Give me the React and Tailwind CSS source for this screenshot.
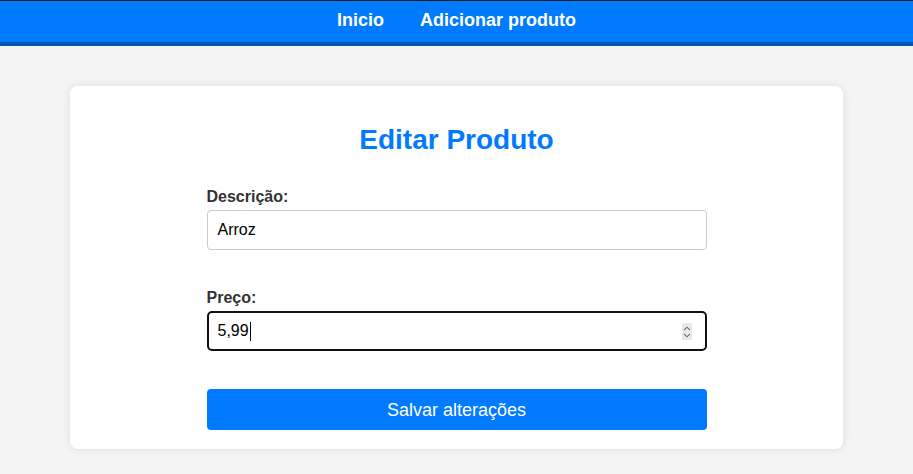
import React from "react";

export default function App() {
  return (
    <div className="min-h-[474px] bg-[#f4f4f4] font-['Liberation_Sans',Arial,sans-serif]">
      <header className="border-t border-t-[#1b1b1b] border-b-4 border-b-[#0056b3] bg-[#007bff] h-[46px] flex items-center justify-center gap-[36px] text-white text-[18px] font-bold leading-[20px]">
        <a className="pb-[3px]">Inicio</a>
        <a className="pb-[3px]">Adicionar produto</a>
      </header>

      <main className="mx-[70px] mt-[40px] bg-white rounded-lg shadow-[0_0_10px_rgba(0,0,0,0.1)] pt-[38px] pb-[19px]">
        <h2 className="text-center text-[#007bff] text-[28px] font-bold leading-[32px]">
          Editar Produto
        </h2>
        <form className="w-[500px] mx-auto mt-[32px]">
          <label className="block text-[#333] text-[16px] font-bold leading-[18px] mb-[4px]">
            Descrição:
          </label>
          <div className="h-[40px] border border-[#cccccc] rounded-[4px] px-[10px] flex items-center text-[16px] text-black leading-[18px]">
            Arroz
          </div>

          <label className="block text-[#333] text-[16px] font-bold leading-[18px] mt-[39px] mb-[4px]">
            Preço:
          </label>
          <div className="relative h-[40px] border-2 border-[#111] rounded-[5px] px-[9px] flex items-center text-[16px] text-black leading-[18px]">
            <span>5,99</span>
            <span className="inline-block w-px h-[19px] bg-black ml-[1px]" />
            <span className="absolute right-[13px] top-[10px] w-[10px] h-[17px] bg-[#e9e9e9] flex flex-col items-center justify-center gap-[2px]">
              <svg width="8" height="5" viewBox="0 0 8 5">
                <path d="M1 4.2 L4 1.2 L7 4.2" fill="none" stroke="#6b6b6b" strokeWidth="1.1" />
              </svg>
              <svg width="8" height="5" viewBox="0 0 8 5">
                <path d="M1 0.8 L4 3.8 L7 0.8" fill="none" stroke="#6b6b6b" strokeWidth="1.1" />
              </svg>
            </span>
          </div>

          <button
            type="button"
            className="mt-[38px] w-full h-[41px] bg-[#007bff] text-white text-[18px] leading-[20px] rounded-[4px]"
          >
            Salvar alterações
          </button>
        </form>
      </main>
    </div>
  );
}
